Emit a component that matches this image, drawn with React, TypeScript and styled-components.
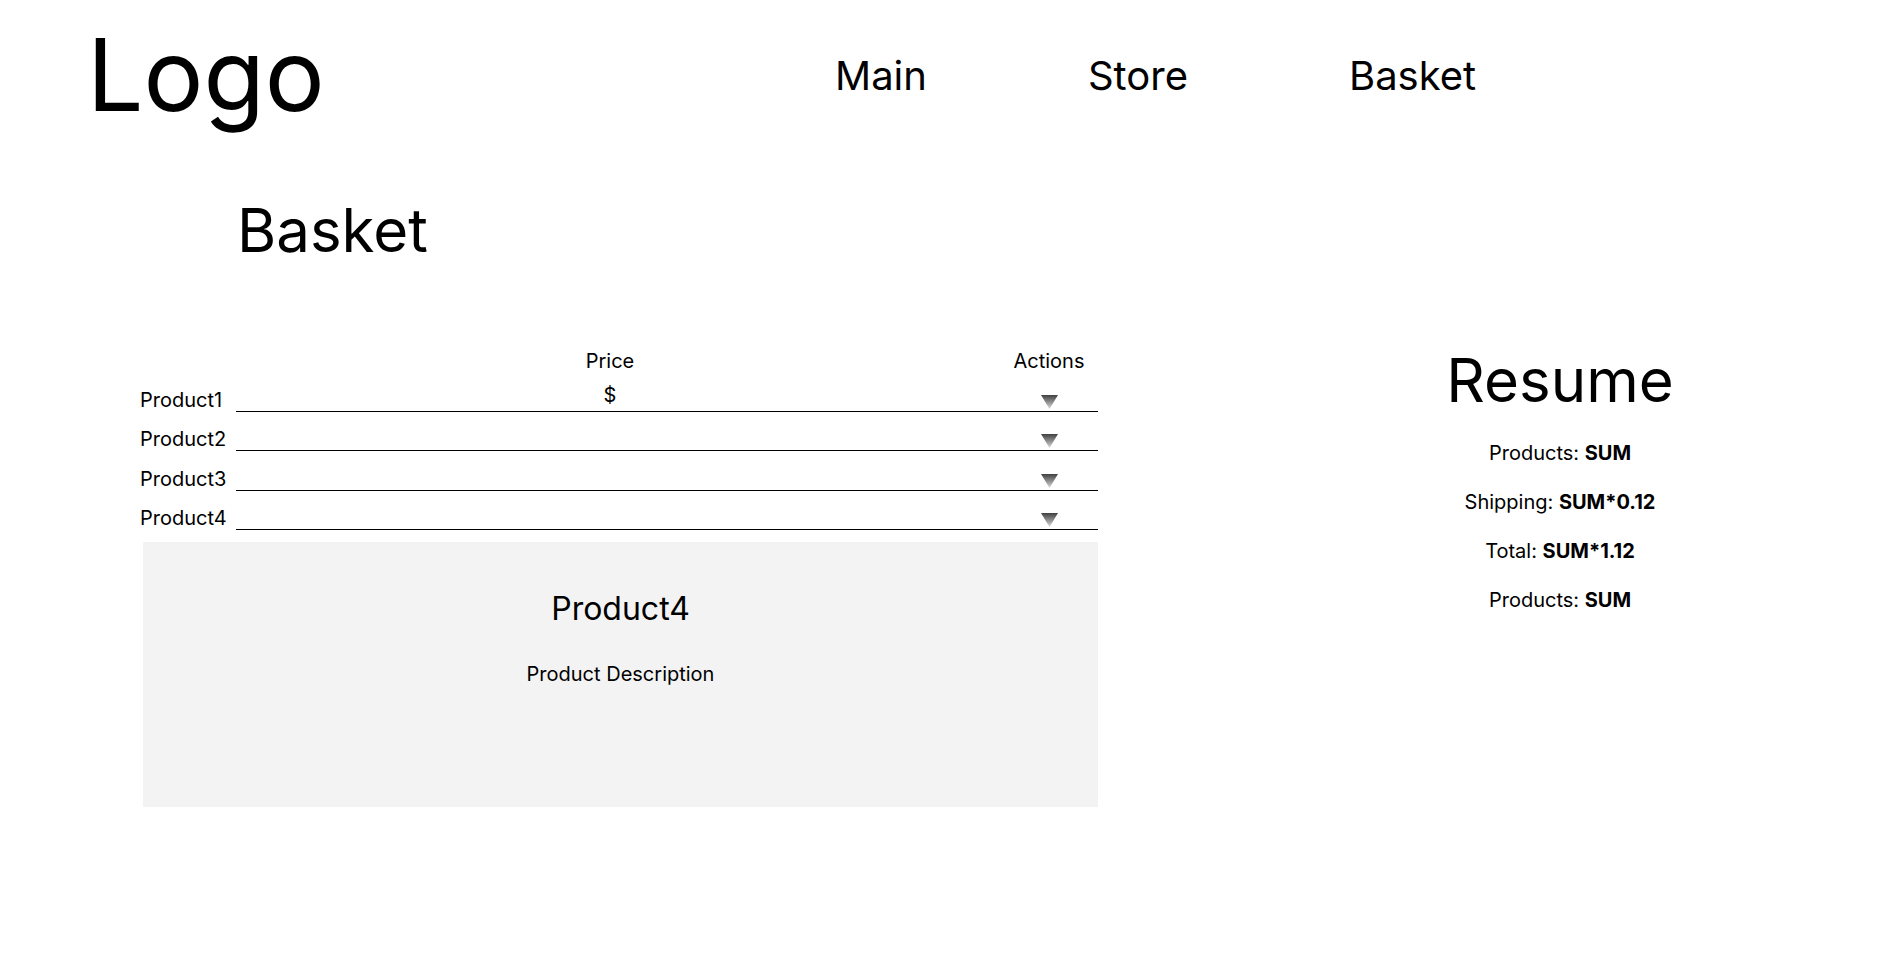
import React from "react";
import styled, { createGlobalStyle } from "styled-components";

const GlobalStyle = createGlobalStyle`
  html, body {
    margin: 0;
    padding: 0;
    background: #ffffff;
    color: #000000;
    font-family: Inter, "Noto Sans", "Liberation Sans", sans-serif;
  }
  * { box-sizing: border-box; }
`;

const Page = styled.div`
  width: 1900px;
  min-height: 973px;
  background: #fff;
`;

const Header = styled.header`
  display: grid;
  grid-template-columns: 748px auto;
  align-items: center;
  padding: 25px 0 0 87px;
`;

const Logo = styled.div`
  font-size: 100px;
  line-height: 100px;
  font-weight: 400;
`;

const Nav = styled.nav`
  display: flex;
  gap: 161px;
  padding-top: 2px;
`;

const NavLink = styled.a`
  font-size: 40px;
  line-height: 40px;
  color: #000;
  text-decoration: none;
  cursor: pointer;
`;

const PageTitle = styled.h1`
  margin: 75px 0 0 237px;
  font-size: 60px;
  line-height: 60px;
  font-weight: 400;
`;

const Content = styled.main`
  display: flex;
  align-items: flex-start;
  margin-top: 88.7px;
  padding-left: 140px;
`;

const BasketColumn = styled.section`
  flex: 0 0 958px;
  display: flex;
  flex-direction: column;
`;

const Row = styled.div`
  display: grid;
  grid-template-columns: 96px 1fr;
  align-items: end;
`;

const Cells = styled.div<{ $lined?: boolean }>`
  display: grid;
  grid-template-columns: 324px 100px 1fr 98px;
  align-items: end;
  height: ${(p) => (p.$lined ? "39.33px" : "24px")};
  border-bottom: ${(p) => (p.$lined ? "1px solid #000" : "none")};
`;

const Text = styled.span<{ $align?: string; $col?: number; $pb?: number }>`
  font-size: 20px;
  line-height: 24px;
  white-space: nowrap;
  text-align: ${(p) => p.$align || "left"};
  grid-column: ${(p) => p.$col || "auto"};
  padding-bottom: ${(p) => p.$pb || 0}px;
`;

const ArrowCell = styled.div`
  grid-column: 4;
  display: flex;
  justify-content: center;
  padding-bottom: 2px;
`;

const DetailCard = styled.div`
  margin: 12px 0 0 3px;
  height: 265px;
  background: #f3f3f3;
  display: flex;
  flex-direction: column;
  align-items: center;
  padding-top: 47px;
`;

const DetailTitle = styled.h2`
  margin: 0;
  font-size: 32px;
  font-weight: 400;
  line-height: 39px;
`;

const DetailText = styled.p`
  margin: 34px 0 0;
  font-size: 20px;
  line-height: 24px;
`;

const ResumeColumn = styled.aside`
  flex: 0 0 720px;
  margin: 1.5px 0 0 102px;
  display: flex;
  flex-direction: column;
  align-items: center;
`;

const ResumeTitle = styled.h2`
  margin: 0;
  font-size: 60px;
  line-height: 60px;
  font-weight: 400;
`;

const SummaryList = styled.div`
  margin-top: 30.7px;
  display: flex;
  flex-direction: column;
  align-items: center;
  gap: 25px;
`;

const SummaryLine = styled.div`
  font-size: 20px;
  line-height: 24px;
  white-space: nowrap;
  b { font-weight: 700; }
`;

const Arrow = () => (
  <svg width="17" height="14" viewBox="0 0 17 14">
    <defs>
      <linearGradient id="arrowGrad" x1="0" y1="0" x2="0" y2="1">
        <stop offset="0" stopColor="#404040" />
        <stop offset="1" stopColor="#dcdcdc" />
      </linearGradient>
    </defs>
    <polygon points="0,0 17,0 8.5,14" fill="url(#arrowGrad)" />
  </svg>
);

const products = ["Product1", "Product2", "Product3", "Product4"];

const summary: [string, string][] = [
  ["Products:", "SUM"],
  ["Shipping:", "SUM*0.12"],
  ["Total:", "SUM*1.12"],
  ["Products:", "SUM"],
];

export default function App() {
  return (
    <Page>
      <GlobalStyle />
      <Header>
        <Logo>Logo</Logo>
        <Nav>
          <NavLink>Main</NavLink>
          <NavLink>Store</NavLink>
          <NavLink>Basket</NavLink>
        </Nav>
      </Header>
      <PageTitle>Basket</PageTitle>
      <Content>
        <BasketColumn>
          <Row>
            <span />
            <Cells>
              <Text $col={2} $align="center">Price</Text>
              <Text $col={4} $align="center">Actions</Text>
            </Cells>
          </Row>
          {products.map((name, i) => (
            <Row key={name}>
              <Text>{name}</Text>
              <Cells $lined>
                {i === 0 && (
                  <Text $col={2} $align="center" $pb={4}>$</Text>
                )}
                <ArrowCell>
                  <Arrow />
                </ArrowCell>
              </Cells>
            </Row>
          ))}
          <DetailCard>
            <DetailTitle>Product4</DetailTitle>
            <DetailText>Product Description</DetailText>
          </DetailCard>
        </BasketColumn>
        <ResumeColumn>
          <ResumeTitle>Resume</ResumeTitle>
          <SummaryList>
            {summary.map(([label, value], i) => (
              <SummaryLine key={i}>
                {label} <b>{value}</b>
              </SummaryLine>
            ))}
          </SummaryList>
        </ResumeColumn>
      </Content>
    </Page>
  );
}
